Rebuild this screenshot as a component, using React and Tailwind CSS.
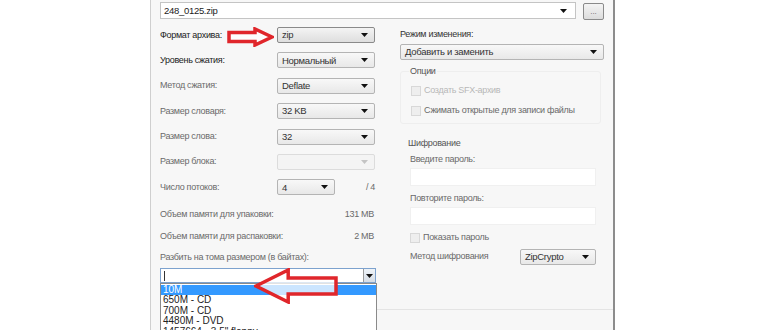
import React from 'react';

const font = { fontFamily: '"Liberation Sans", Arial, sans-serif' };

function Arrow({ disabled }) {
  return (
    <svg width="7" height="4" viewBox="0 0 7 4" className="shrink-0">
      <path d="M0 0h7L3.5 4z" fill={disabled ? '#c4c4c4' : '#111'} />
    </svg>
  );
}

function Combo({ value, width = 'w-[98px]', disabled, strong }) {
  return (
    <div
      className={`${width} h-[16px] flex items-center justify-between pl-[4px] pr-[6px] rounded-[2px] border ${
        disabled
          ? 'border-[#dcdcdc] bg-[#f4f4f4]'
          : strong
          ? 'border-[#8a8a8a] bg-gradient-to-b from-[#f4f4f4] to-[#dedede]'
          : 'border-[#b4b4b4] bg-gradient-to-b from-[#f8f8f8] to-[#e8e8e8]'
      }`}
    >
      <span className="text-[9.5px] tracking-[-0.3px] text-[#333] leading-none whitespace-nowrap">{value}</span>
      <Arrow disabled={disabled} />
    </div>
  );
}

function Row({ label, children, dark }) {
  return (
    <div className="flex items-center h-[16px]">
      <span className={`w-[117px] text-[9px] tracking-[-0.3px] leading-none whitespace-nowrap ${dark ? 'text-[#222]' : 'text-[#6a6a6a]'}`}>{label}</span>
      {children}
    </div>
  );
}

function Check({ label, disabled }) {
  return (
    <div className="flex items-center gap-[3px] h-[12px]">
      <div className="w-[10px] h-[10px] border border-[#d8d8d8] bg-[#eeeeee]" />
      <span className={`text-[9px] tracking-[-0.3px] leading-none whitespace-nowrap ${disabled ? 'text-[#b8b8b8]' : 'text-[#6a6a6a]'}`}>{label}</span>
    </div>
  );
}

function RedArrow({ className, width, height, left }) {
  // outlined red block arrow
  const w = width;
  const h = height;
  const head = h * 0.95;
  const t = h * 0.28;
  const pts = left
    ? `2,${h / 2} ${head},2 ${head},${t} ${w - 2},${t} ${w - 2},${h - t} ${head},${h - t} ${head},${h - 2}`
    : `${w - 2},${h / 2} ${w - head},2 ${w - head},${t} 2,${t} 2,${h - t} ${w - head},${h - t} ${w - head},${h - 2}`;
  return (
    <svg width={w} height={h} className={className}>
      <polygon points={pts} fill="rgba(255,255,255,0.75)" stroke="#e0262b" strokeWidth="3.5" strokeLinejoin="miter" />
    </svg>
  );
}

export default function App() {
  const list = ['10M', '650M - CD', '700M - CD', '4480M - DVD', '1457664 - 3.5" floppy'];
  const txt = 'text-[9px] tracking-[-0.3px] text-[#6a6a6a] whitespace-nowrap';
  return (
    <div className="w-[770px] h-[330px] bg-white flex overflow-hidden relative" style={font}>
      <div className="w-[150px] shrink-0" />
      <div className="w-[465px] h-[330px] bg-[#f7f7f7] border-l border-[#cfcfcf] border-r-2 border-r-[#8c8c8c] flex flex-col">
        {/* archive path */}
        <div className="flex items-start pt-[2px] pl-[9px]">
          <div className="w-[416px] h-[17px] bg-white border border-[#c4c4c4] flex items-center justify-between pl-[3px] pr-[8px]">
            <span className="text-[9.5px] tracking-[-0.3px] text-[#222] leading-none">248_0125.zip</span>
            <Arrow />
          </div>
          <div className="ml-[7px] mt-[1px] w-[21px] h-[17px] rounded-[2px] border border-[#8a8a8a] bg-gradient-to-b from-[#f4f4f4] to-[#dcdcdc] flex items-center justify-center">
            <span className="text-[8px] text-[#666] leading-none">...</span>
          </div>
        </div>

        <div className="flex pl-[9px]">
          {/* left column */}
          <div className="w-[217px] flex flex-col">
            <div className="flex flex-col gap-[9.4px] mt-[7px]">
              <Row label="Формат архива:" dark><Combo value="zip" strong /></Row>
              <Row label="Уровень сжатия:" dark><Combo value="Нормальный" /></Row>
              <Row label="Метод сжатия:"><Combo value="Deflate" /></Row>
              <Row label="Размер словаря:"><Combo value="32 KB" /></Row>
              <Row label="Размер слова:"><Combo value="32" /></Row>
              <Row label="Размер блока:"><Combo value="" disabled /></Row>
              <Row label="Число потоков:">
                <Combo value="4" width="w-[58px]" />
                <span className={`ml-auto mr-[2px] leading-none ${txt}`}>/ 4</span>
              </Row>
            </div>
            <div className={`mt-[8px] h-[22px] flex items-center justify-between pr-[3px] ${txt}`}>
              <span>Объем памяти для упаковки:</span>
              <span>131 MB</span>
            </div>
            <div className={`h-[22px] flex items-center justify-between pr-[3px] ${txt}`}>
              <span>Объем памяти для распаковки:</span>
              <span>2 MB</span>
            </div>
            <div className={`h-[20px] flex items-center ${txt}`}>Разбить на тома размером (в байтах):</div>
            <div className="mt-[1px] w-[216px] h-[15px] bg-white border border-[#7da2ce] flex items-center justify-between pl-[3px]">
              <span className="w-px h-[10px] bg-[#333]" />
              <div className="w-[12px] h-[13px] border-l border-[#9a9a9a] bg-gradient-to-b from-[#eef3f8] to-[#d6dde6] flex items-center justify-center">
                <Arrow />
              </div>
            </div>
          </div>

          {/* right column */}
          <div className="w-[204px] ml-[23px] flex flex-col">
            <div className="mt-[8px] h-[14px] flex items-center text-[9px] tracking-[-0.3px] text-[#333]">Режим изменения:</div>
            <div className="mt-[2px]">
              <Combo value="Добавить и заменить" width="w-[204px]" />
            </div>
            <fieldset className="mt-[5px] mr-[3px] border border-[#eeeeee] rounded-[3px] px-[10px] pb-[6px]">
              <legend className="ml-[-2px] px-[1px] text-[9px] tracking-[-0.3px] text-[#555]">Опции</legend>
              <div className="flex flex-col gap-[8px] mt-[6px]">
                <Check label="Создать SFX-архив" disabled />
                <Check label="Сжимать открытые для записи файлы" />
              </div>
            </fieldset>
            <div className="mt-[15px] ml-[8px] text-[9px] tracking-[-0.3px] text-[#555] leading-none">Шифрование</div>
            <div className="ml-[10px] mr-[8px] flex flex-col">
              <div className={`mt-[7px] leading-none ${txt}`}>Введите пароль:</div>
              <div className="mt-[4px] h-[18px] bg-white border border-[#f0f0f0]" />
              <div className={`mt-[8px] leading-none ${txt}`}>Повторите пароль:</div>
              <div className="mt-[4px] h-[18px] bg-white border border-[#f0f0f0]" />
              <div className="mt-[7px]">
                <Check label="Показать пароль" />
              </div>
              <div className="mt-[5px] flex items-center justify-between">
                <span className={`leading-none ${txt}`}>Метод шифрования</span>
                <Combo value="ZipCrypto" width="w-[76px]" />
              </div>
            </div>
          </div>
        </div>
        <div className="mt-auto mb-[20px] ml-[225px] border-t border-[#e4e4e4]" />
      </div>

      {/* opened drop-down list */}
      <div className="absolute left-[160px] top-[283px] w-[217px] h-[60px] bg-white border border-[#8a8a8a] flex flex-col pt-[1px]">
        {list.map((item, i) => (
          <div
            key={item}
            className={`h-[10.4px] pl-[2px] text-[10px] leading-[10.4px] whitespace-nowrap ${i === 0 ? 'bg-[#3399ff] text-white' : 'text-[#222]'}`}
          >
            {item}
          </div>
        ))}
      </div>

      <RedArrow className="absolute left-[227px] top-[27px]" width={47} height={20} />
      <RedArrow className="absolute left-[254px] top-[268px]" width={84} height={36} left />
    </div>
  );
}
